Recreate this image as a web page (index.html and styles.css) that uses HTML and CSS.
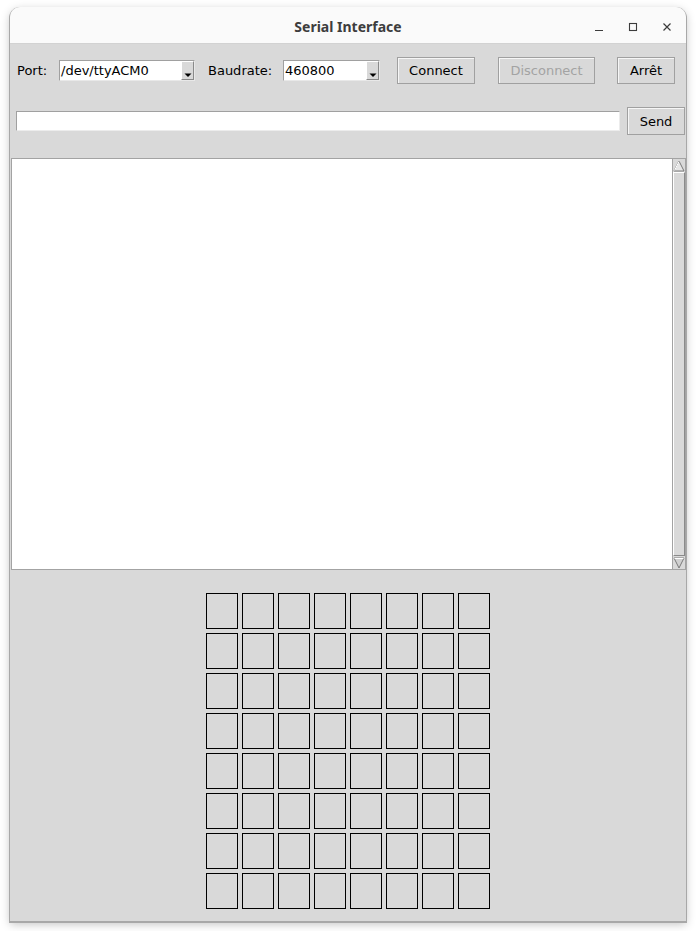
FILE: index.html
```html
<!DOCTYPE html>
<html>
<head>
<meta charset="utf-8">
<title>Serial Interface</title>
<link rel="stylesheet" href="styles.css">
</head>
<body>
<div class="window">
  <div class="titlebar">
    <span class="title">Serial Interface</span>
    <div class="controls">
      <svg class="ctl" width="12" height="12" viewBox="0 0 12 12"><path d="M2 9.5H10" stroke="#3c3c3c" stroke-width="1.2"/></svg>
      <svg class="ctl" width="12" height="12" viewBox="0 0 12 12"><rect x="2.5" y="2.5" width="7" height="7" fill="none" stroke="#3c3c3c" stroke-width="1.1"/></svg>
      <svg class="ctl" width="12" height="12" viewBox="0 0 12 12"><path d="M2.5 2.5L9.5 9.5M9.5 2.5L2.5 9.5" stroke="#3c3c3c" stroke-width="1.2"/></svg>
    </div>
  </div>
  <div class="content">
    <div class="toolbar">
      <span class="label port-label">Port:</span>
      <div class="combo combo-port">
        <span class="combo-text">/dev/ttyACM0</span>
        <span class="combo-btn"><svg width="8" height="6" viewBox="0 0 8 6"><path d="M0.5 1.5H7.5L4 5Z" fill="#000"/></svg></span>
      </div>
      <span class="label baud-label">Baudrate:</span>
      <div class="combo combo-baud">
        <span class="combo-text">460800</span>
        <span class="combo-btn"><svg width="8" height="6" viewBox="0 0 8 6"><path d="M0.5 1.5H7.5L4 5Z" fill="#000"/></svg></span>
      </div>
      <button class="btn btn-connect">Connect</button>
      <button class="btn btn-disconnect" disabled>Disconnect</button>
      <button class="btn btn-stop">Arrêt</button>
    </div>
    <div class="sendrow">
      <div class="entry"></div>
      <button class="btn btn-send">Send</button>
    </div>
    <div class="textarea-wrap">
      <div class="textarea"></div>
      <div class="scrollbar">
        <div class="arrow arrow-up"><svg width="12" height="12" viewBox="0 0 12 12"><path d="M6 1L11 11H1Z" fill="#e6e6e6" stroke="#7a7a7a" stroke-width="1"/><path d="M6 1.5L1.5 10.5" stroke="#ffffff" stroke-width="1"/></svg></div>
        <div class="slider"></div>
        <div class="arrow arrow-down"><svg width="12" height="12" viewBox="0 0 12 12"><path d="M1 1H11L6 11Z" fill="#d0d0d0" stroke="#7a7a7a" stroke-width="1"/><path d="M1.5 1.5H10.5" stroke="#ffffff" stroke-width="1"/></svg></div>
      </div>
    </div>
    <div class="grid-area">
      <div class="grid">
        <div class="cell"></div><div class="cell"></div><div class="cell"></div><div class="cell"></div><div class="cell"></div><div class="cell"></div><div class="cell"></div><div class="cell"></div>
        <div class="cell"></div><div class="cell"></div><div class="cell"></div><div class="cell"></div><div class="cell"></div><div class="cell"></div><div class="cell"></div><div class="cell"></div>
        <div class="cell"></div><div class="cell"></div><div class="cell"></div><div class="cell"></div><div class="cell"></div><div class="cell"></div><div class="cell"></div><div class="cell"></div>
        <div class="cell"></div><div class="cell"></div><div class="cell"></div><div class="cell"></div><div class="cell"></div><div class="cell"></div><div class="cell"></div><div class="cell"></div>
        <div class="cell"></div><div class="cell"></div><div class="cell"></div><div class="cell"></div><div class="cell"></div><div class="cell"></div><div class="cell"></div><div class="cell"></div>
        <div class="cell"></div><div class="cell"></div><div class="cell"></div><div class="cell"></div><div class="cell"></div><div class="cell"></div><div class="cell"></div><div class="cell"></div>
        <div class="cell"></div><div class="cell"></div><div class="cell"></div><div class="cell"></div><div class="cell"></div><div class="cell"></div><div class="cell"></div><div class="cell"></div>
        <div class="cell"></div><div class="cell"></div><div class="cell"></div><div class="cell"></div><div class="cell"></div><div class="cell"></div><div class="cell"></div><div class="cell"></div>
      </div>
    </div>
  </div>
</div>
</body>
</html>
```

FILE: styles.css
```css
* { box-sizing: border-box; }
html, body { margin: 0; padding: 0; background: #ffffff; }
body {
  width: 696px;
  height: 931px;
  overflow: hidden;
  padding: 7px 10px 0 10px;
  font-family: "DejaVu Sans", sans-serif;
  font-size: 13px;
  color: #000;
}
.window {
  width: 676px;
  height: 914px;
  border-radius: 10px 10px 0 0;
  background: #d9d9d9;
  box-shadow: 0 1px 0 1px #a8a8a8, 0 3px 10px rgba(0,0,0,0.25);
  overflow: hidden;
  display: flex;
  flex-direction: column;
}
.titlebar {
  height: 37px;
  background: #fafafa;
  border-bottom: 1px solid #d2d2d2;
  position: relative;
  display: flex;
  align-items: center;
  justify-content: center;
  flex: none;
}
.title {
  font-family: "Noto Sans", "DejaVu Sans", sans-serif;
  font-weight: bold;
  font-size: 14px;
  color: #3d3d3d;
  margin-top: 3px;
}
.controls {
  position: absolute;
  right: 13px;
  top: 14px;
  display: flex;
  gap: 22px;
}
.ctl { display: block; }
.content {
  flex: 1;
  display: flex;
  flex-direction: column;
}
.toolbar {
  display: flex;
  align-items: center;
  height: 27px;
  margin-top: 13px;
  padding-left: 7px;
}
.label { color: #000; }
.port-label { width: 42px; }
.baud-label { margin-left: 13px; width: 75px; }
.combo {
  height: 21px;
  background: #fff;
  border: 1px solid #a0a0a0;
  border-right-color: #e8e8e8;
  border-bottom-color: #e8e8e8;
  display: flex;
  align-items: center;
  position: relative;
}
.combo-port { width: 136px; }
.combo-baud { width: 97px; }
.combo-text { padding-left: 1px; flex: 1; line-height: 19px; }
.combo-btn {
  width: 13px;
  height: 19px;
  background: #d9d9d9;
  border: 1px solid #fff;
  border-right-color: #8a8a8a;
  border-bottom-color: #8a8a8a;
  display: flex;
  align-items: flex-end;
  justify-content: center;
  padding-bottom: 1px;
}
.combo-btn svg { display: block; }
.btn {
  font-family: "DejaVu Sans", sans-serif;
  font-size: 13px;
  height: 27px;
  background: #d9d9d9;
  border: 1px solid #a0a0a0;
  box-shadow: inset 1px 1px 0 #f6f6f6;
  padding: 0;
  color: #000;
  margin: 0;
}
.btn-connect { width: 78px; margin-left: 17px; }
.btn-disconnect { width: 97px; margin-left: 23px; color: #a3a3a3; }
.btn-stop { width: 58px; margin-left: 22px; }
.sendrow {
  display: flex;
  align-items: center;
  margin-top: 23px;
  height: 28px;
  padding-left: 6px;
}
.entry {
  width: 604px;
  height: 20px;
  background: #fff;
  border: 1px solid #a0a0a0;
  border-right-color: #ececec;
  border-bottom-color: #ececec;
}
.btn-send { width: 58px; height: 28px; margin-left: 7px; }
.textarea-wrap {
  margin-top: 23px;
  margin-left: 1px;
  height: 412px;
  display: flex;
}
.textarea {
  width: 661px;
  height: 100%;
  background: #fff;
  border: 1px solid #a3a3a3;
  border-right: none;
}
.scrollbar {
  width: 14px;
  height: 100%;
  background: #c3c3c3;
  border: 1px solid #a3a3a3;
  display: flex;
  flex-direction: column;
}
.arrow {
  height: 13px;
  display: flex;
  align-items: center;
  justify-content: center;
  background: #d9d9d9;
}
.arrow svg { display: block; }
.slider {
  flex: 1;
  background: #d9d9d9;
  border: 1px solid #8a8a8a;
  border-top-color: #fff;
  border-left-color: #fff;
  margin: 0;
}
.grid-area {
  display: flex;
  justify-content: center;
  margin-top: 23px;
}
.grid {
  display: grid;
  grid-template-columns: repeat(8, 32px);
  grid-auto-rows: 36px;
  column-gap: 4px;
  row-gap: 4px;
}
.cell {
  border: 1px solid #000;
  background: #d9d9d9;
}
```
